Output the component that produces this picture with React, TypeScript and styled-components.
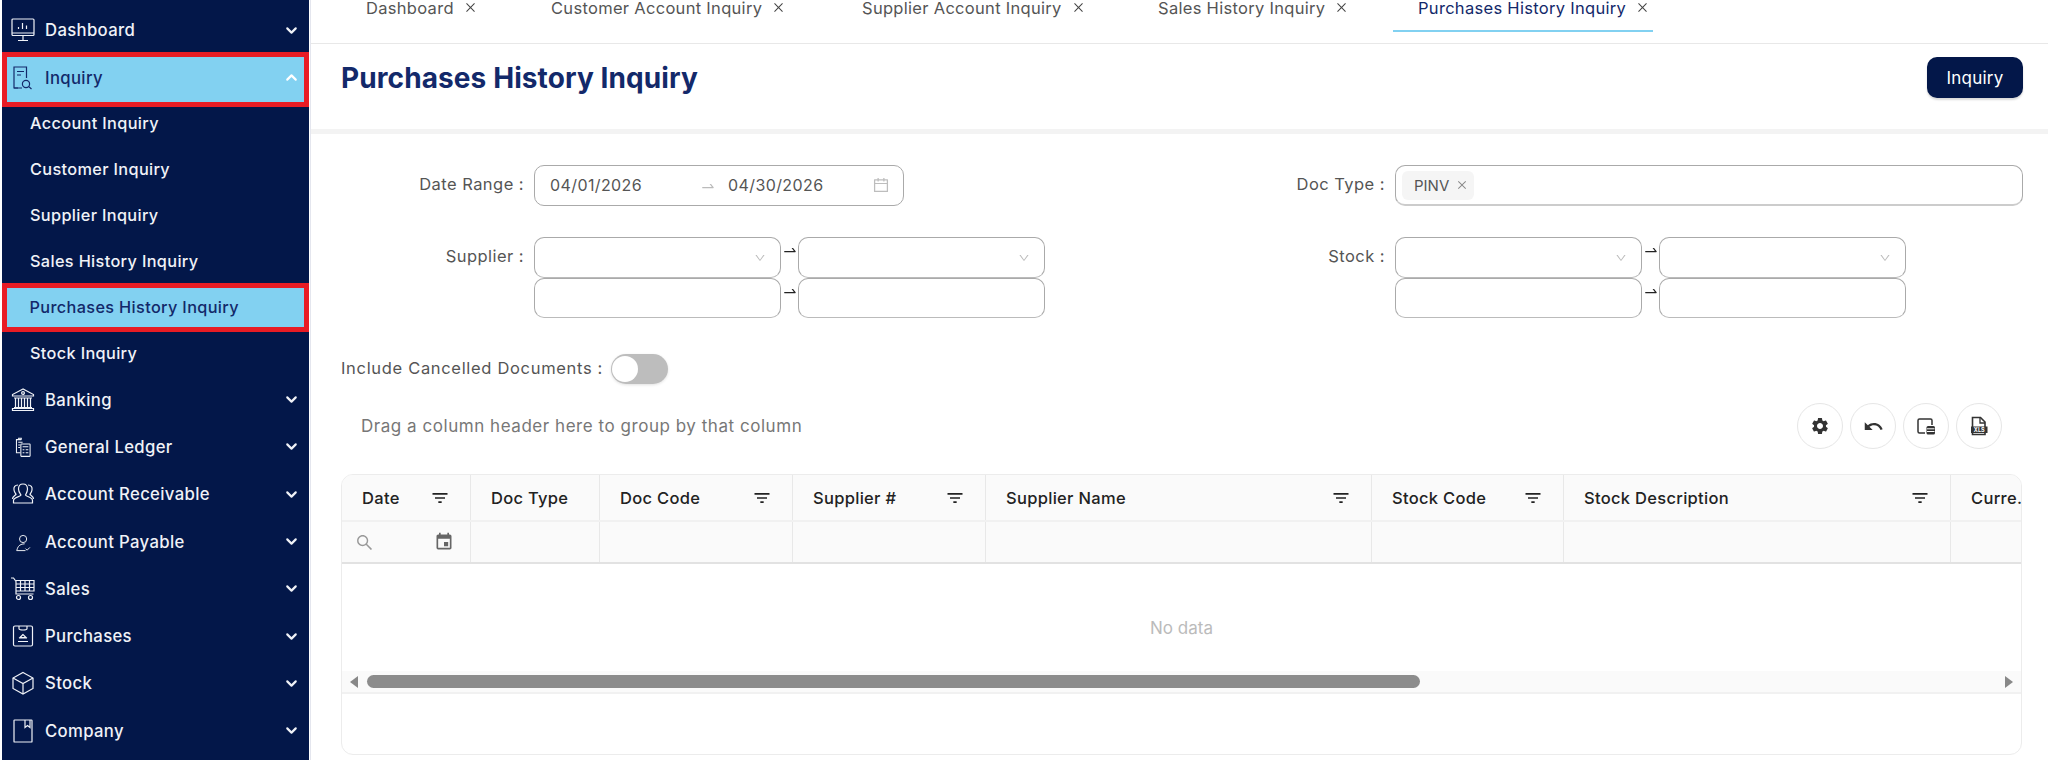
import React from "react";
import styled, { createGlobalStyle } from "styled-components";
import { ChevronDown, ChevronUp } from "lucide-react";
import {
  AiOutlineCalendar,
  AiOutlineClose,
  AiOutlineDown,
  AiOutlineSearch,
  AiOutlineSwapRight,
} from "react-icons/ai";
import { MdEvent, MdFilterList, MdSettings, MdUndo } from "react-icons/md";

const NAVY = "#031749";
const SKY = "#82d1f1";

const GlobalStyle = createGlobalStyle`
  html, body {
    margin: 0;
    padding: 0;
    background: #fff;
    overflow: hidden;
  }
  body, input, button {
    font-family: Inter, "Open Sans", "Liberation Sans", sans-serif;
  }
  * {
    box-sizing: border-box;
  }
`;

// sidebar icons, all drawn on a 24 box
const icons: Record<string, React.ReactNode> = {
  dashboard: (
    <>
      <rect x="1" y="1" width="22" height="16.5" rx="1" />
      <path d="M1 15h22M12 17.5V22M7 22.5h10M7.5 11V9M11.5 11V5M15.5 11V7.5" />
    </>
  ),
  inquiry: (
    <>
      <path d="M15.5 12V1H3v21h8" />
      <path d="M6 5.5h7M6 9h4" />
      <circle cx="15" cy="18" r="3.6" />
      <path d="M17.8 20.6l2.7 2.4M3 22h4" />
    </>
  ),
  banking: (
    <>
      <path d="M12 1L1.5 6.5v1.5h21V6.500z" />
      <circle cx="12" cy="5" r="1.400" />
      <path d="M3 10h18M4.500 10v9M7.500 10v9M10.500 10v9M13.500 10v9M16.500 10v9M19.500 10v9M3 19.500h18M1.500 22.500h21v-2h-21z" />
    </>
  ),
  ledger: (
    <g transform="translate(1.5 2) scale(.88)">
      <path d="M10 3H4.500v15H9M7 3V1.500h3V3M6.500 6h5M6.500 9h2M6.500 12h2" />
      <rect x="9.500" y="8" width="10.500" height="14" rx=".6" />
      <path d="M11.500 11h6.500M11.500 14.500h2M15 14.500h3M11.500 18h2M15 18h3" />
    </g>
  ),
  receivable: (
    <>
      <path d="M12 2c3 0 4.500 2.200 4.500 5s-1.500 5-2 6c1 2 7 2 7 5.500V21H2.500v-2.500C2.500 15 9 15 10 13c-.6-1-2.500-3-2.500-6s1.500-5 4.500-5z" />
      <path d="M17 3c3 0 4.500 2 4 5s-2 3.500-2 4.500c1 1 3.500 2 3.500 4.500M7 3C4 3 2.500 5 3 8s2 3.500 2 4.500c-1 1-3.500 2-3.500 4.500" />
    </>
  ),
  payable: (
    <g transform="translate(2.500 3) scale(.8)">
      <circle cx="12" cy="7.500" r="4.500" />
      <path d="M14 13.500c-5 0-8 2.500-9 5.500l-1 3h11M15 19.500l2 2 3.500-3.500" />
    </g>
  ),
  sales: (
    <>
      <path d="M0 1h2.500l2.500 3.500v12.500h17.500M5 3.500h18v10.500H5M5 7h18M5 10.500h18M9.500 3.500V14M14 3.500V14M18.500 3.500V14" />
      <circle cx="7.500" cy="20.500" r="2" />
      <circle cx="19.500" cy="20.500" r="2" />
    </>
  ),
  purchases: (
    <>
      <rect x="2.500" y="2" width="19" height="20" rx="1.500" />
      <path d="M8 2v2.500c0 2 8 2 8 0V2M7 17.500h10M8 14h8M12 10.500l-3 3h6z" />
    </>
  ),
  stock: (
    <>
      <path d="M12 1.500l10 5.500v10.500L12 23 2 17.500V7z" />
      <path d="M2 7l10 5.500L22 7M12 12.500V23" />
    </>
  ),
  company: (
    <>
      <rect x="3" y="1" width="18" height="22" rx=".6" />
      <path d="M14 1v7.500l2.500-2 2.500 2V1" />
    </>
  ),
};

const menuAfter = [
  ["Banking", "banking"],
  ["General Ledger", "ledger"],
  ["Account Receivable", "receivable"],
  ["Account Payable", "payable"],
  ["Sales", "sales"],
  ["Purchases", "purchases"],
  ["Stock", "stock"],
  ["Company", "company"],
];

const subItems = [
  "Account Inquiry",
  "Customer Inquiry",
  "Supplier Inquiry",
  "Sales History Inquiry",
  "Purchases History Inquiry",
  "Stock Inquiry",
];

const tabs = [
  { label: "Dashboard", width: 185 },
  { label: "Customer Account Inquiry", width: 311 },
  { label: "Supplier Account Inquiry", width: 296 },
  { label: "Sales History Inquiry", width: 260 },
  { label: "Purchases History Inquiry", width: 260 },
];

const columns = [
  { label: "Date", width: 129, filter: true },
  { label: "Doc Type", width: 129, filter: false },
  { label: "Doc Code", width: 193, filter: true },
  { label: "Supplier #", width: 193, filter: true },
  { label: "Supplier Name", width: 386, filter: true },
  { label: "Stock Code", width: 192, filter: true },
  { label: "Stock Description", width: 387, filter: true },
  { label: "Curre.", width: 71, filter: false },
];

const NavIcon: React.FC<{ name: string; dark?: boolean }> = ({ name, dark }) => (
  <IconSvg viewBox="0 0 24 24" $dark={dark}>
    {icons[name]}
  </IconSvg>
);

const RangeInputs: React.FC = () => (
  <RangeGrid>
    <SelectBox>
      <AiOutlineDown size={12} />
    </SelectBox>
    <RangeArrow>
      <AiOutlineSwapRight size={16} />
    </RangeArrow>
    <SelectBox>
      <AiOutlineDown size={12} />
    </SelectBox>
    <SelectBox $short />
    <RangeArrow>
      <AiOutlineSwapRight size={16} />
    </RangeArrow>
    <SelectBox $short />
  </RangeGrid>
);

const App: React.FC = () => (
  <Page>
    <GlobalStyle />
    <Sidebar>
      <MenuRow $first>
        <NavIcon name="dashboard" />
        <MenuLabel>Dashboard</MenuLabel>
        <ChevronDown size={17} strokeWidth={3} />
      </MenuRow>
      <MenuRowActive>
        <NavIcon name="inquiry" dark />
        <MenuLabel>Inquiry</MenuLabel>
        <ChevronUp size={17} strokeWidth={3} color="#fff" />
      </MenuRowActive>
      <SubList>
        {subItems.map((item) => (
          <SubItem key={item} $active={item === "Purchases History Inquiry"}>
            {item}
          </SubItem>
        ))}
      </SubList>
      {menuAfter.map(([label, icon]) => (
        <MenuRow key={label}>
          <NavIcon name={icon} />
          <MenuLabel>{label}</MenuLabel>
          <ChevronDown size={17} strokeWidth={3} />
        </MenuRow>
      ))}
    </Sidebar>

    <Main>
      <TabBar>
        {tabs.map((tab) => (
          <Tab key={tab.label} $width={tab.width} $active={tab.label === "Purchases History Inquiry"}>
            <TabText>{tab.label}</TabText>
            <AiOutlineClose size={13} />
          </Tab>
        ))}
      </TabBar>

      <PageHeader>
        <Title>Purchases History Inquiry</Title>
        <PrimaryButton>Inquiry</PrimaryButton>
      </PageHeader>

      <FormGrid>
        <FormRow>
          <FieldLabel>Date Range :</FieldLabel>
          <DateBox>
            <DateValue $width={178}>04/01/2026</DateValue>
            <DateValue $width={144}>04/30/2026</DateValue>
            <AiOutlineCalendar size={18} color="#bdbdbd" />
            <DateArrow>
              <AiOutlineSwapRight size={16} />
            </DateArrow>
          </DateBox>
        </FormRow>
        <FormRow>
          <FieldLabel>Doc Type :</FieldLabel>
          <TagBox>
            <Tag>
              PINV
              <AiOutlineClose size={12} color="#888" />
            </Tag>
          </TagBox>
        </FormRow>
        <FormRow>
          <FieldLabel>Supplier :</FieldLabel>
          <RangeInputs />
        </FormRow>
        <FormRow>
          <FieldLabel>Stock :</FieldLabel>
          <RangeInputs />
        </FormRow>
      </FormGrid>

      <SwitchRow>
        <FieldText>Include Cancelled Documents :</FieldText>
        <SwitchTrack>
          <SwitchKnob />
        </SwitchTrack>
      </SwitchRow>

      <GridToolbar>
        <GroupHint>Drag a column header here to group by that column</GroupHint>
        <ToolButtons>
          <ToolButton>
            <MdSettings size={20} />
          </ToolButton>
          <ToolButton>
            <MdUndo size={21} />
          </ToolButton>
          <ToolButton>
            <svg width="20" height="20" viewBox="0 0 20 20" fill="none">
              <path d="M9 17H3.500A1.500 1.500 0 0 1 2 15.500v-11A1.500 1.500 0 0 1 3.500 3h11A1.500 1.500 0 0 1 16 4.500V9" stroke="#333" strokeWidth="1.500" />
              <rect x="10.500" y="10" width="8.500" height="8.500" rx="1.500" fill="#333" />
              <path d="M11 12.800h7.500M11 15.500h7.500" stroke="#fff" strokeWidth="1" />
            </svg>
          </ToolButton>
          <ToolButton>
            <svg width="20" height="20" viewBox="0 0 20 20" fill="none">
              <path d="M3.500 11V1.500h8l4.500 4.500v5M3.500 16.500v2h12.500v-2" stroke="#333" strokeWidth="1.600" />
              <path d="M11 1.500v5.500h5" stroke="#333" strokeWidth="1.300" />
              <rect x="2" y="10.500" width="16.500" height="6.500" fill="#333" />
              <XlsText x="10.250" y="15.700">XLS</XlsText>
            </svg>
          </ToolButton>
        </ToolButtons>
      </GridToolbar>

      <TableShell>
        <HeadRow>
          {columns.map((col) => (
            <HeadCell key={col.label} $width={col.width}>
              {col.label}
              {col.filter && <MdFilterList size={20} />}
            </HeadCell>
          ))}
        </HeadRow>
        <FilterRow>
          {columns.map((col, i) => (
            <FilterCell key={col.label} $width={col.width}>
              {i === 0 && (
                <>
                  <AiOutlineSearch size={19} color="#999" />
                  <MdEvent size={20} color="#666" />
                </>
              )}
            </FilterCell>
          ))}
        </FilterRow>
        <EmptyBody>No data</EmptyBody>
        <ScrollBar>
          <svg width="10" height="14" viewBox="0 0 10 14">
            <polygon points="9,1 9,13 1,7" fill="#888" />
          </svg>
          <ScrollThumb />
          <svg width="10" height="14" viewBox="0 0 10 14">
            <polygon points="1,1 1,13 9,7" fill="#888" />
          </svg>
        </ScrollBar>
      </TableShell>
    </Main>
  </Page>
);

export default App;

const Page = styled.div`
  display: flex;
  width: 2048px;
  height: 760px;
  overflow: hidden;
`;

const Sidebar = styled.aside`
  flex: none;
  width: 307px;
  height: 760px;
  margin-left: 2px;
  background: ${NAVY};
  color: #f0f2f7;
  overflow: hidden;
  font-size: 16.3px;
  font-weight: 500;
`;

const MenuRow = styled.div<{ $first?: boolean }>`
  display: flex;
  align-items: center;
  height: ${({ $first }) => ($first ? "52px" : "47.3px")};
  padding: ${({ $first }) => ($first ? "8px" : "0")} 9px 0 9px;
`;

const MenuRowActive = styled.div`
  display: flex;
  align-items: center;
  height: 55px;
  padding: 0 4px 4px 4px;
  background: ${SKY};
  border: 5.5px solid #e81c24;
  color: #13296a;
`;

const MenuLabel = styled.span`
  flex: 1;
  margin-left: 10px;
  font-size: 16.7px;
  letter-spacing: 0.35px;
`;

const IconSvg = styled.svg<{ $dark?: boolean }>`
  flex: none;
  width: 24px;
  height: 24px;
  fill: none;
  stroke: ${({ $dark }) => ($dark ? "#13296a" : "#f0f2f7")};
  stroke-width: 1.2;
`;

const SubList = styled.div`
  margin-top: -7px;
`;

const SubItem = styled.div<{ $active?: boolean }>`
  position: relative;
  display: flex;
  align-items: center;
  height: ${({ $active }) => ($active ? "49px" : "46px")};
  margin: ${({ $active }) => ($active ? "-1.5px 0" : "0")};
  padding-left: ${({ $active }) => ($active ? "22.5px" : "28px")};
  letter-spacing: 0.35px;
  ${({ $active }) =>
    $active
      ? `
    background: ${SKY};
    border: 5.5px solid #e81c24;
    color: #13296a;
  `
      : ""}
`;

const Main = styled.main`
  flex: 1;
  min-width: 0;
  margin-left: 1px;
  border-left: 1px solid #e4e6ee;
`;

const TabBar = styled.nav`
  display: flex;
  height: 44px;
  padding-left: 30px;
  border-bottom: 1px solid #e8e8e8;
  font-size: 16.5px;
  color: #555;
`;

const Tab = styled.div<{ $width: number; $active?: boolean }>`
  display: flex;
  flex: none;
  align-items: flex-start;
  gap: 10px;
  width: ${({ $width }) => $width}px;
  height: 32px;
  padding-left: 25px;
  line-height: 17px;
  color: ${({ $active }) => ($active ? "#13296a" : "#555")};
  border-bottom: ${({ $active }) => ($active ? `2px solid ${SKY}` : "none")};

  svg {
    margin-top: 1px;
    color: #444;
  }
`;

const TabText = styled.span`
  letter-spacing: 0.3px;
  white-space: nowrap;
`;

const PageHeader = styled.header`
  display: flex;
  align-items: center;
  justify-content: space-between;
  height: 90px;
  padding: 0 25px 18px 30px;
  border-bottom: 5px solid #f3f3f3;
`;

const Title = styled.h1`
  margin: 0;
  font-size: 28px;
  font-weight: 700;
  color: #13296a;
  letter-spacing: 0.1px;
`;

const PrimaryButton = styled.button`
  width: 96px;
  height: 41px;
  border: none;
  border-radius: 10px;
  background: ${NAVY};
  box-shadow: 0 2px 2px rgba(0, 0, 0, 0.15);
  color: #fff;
  font-size: 17px;
  letter-spacing: 0.2px;
`;

const FormGrid = styled.section`
  display: grid;
  grid-template-columns: 861px 1fr;
  row-gap: 31px;
  padding: 31px 25px 0 0;
`;

const FormRow = styled.div`
  display: flex;
  align-items: flex-start;
  gap: 10px;
`;

const FieldLabel = styled.label`
  flex: none;
  width: 213px;
  height: 41px;
  line-height: 39px;
  text-align: right;
  font-size: 16.5px;
  color: #555;
  letter-spacing: 0.45px;
`;

const DateBox = styled.div`
  position: relative;
  display: flex;
  align-items: center;
  width: 370px;
  height: 41px;
  padding: 0 0 2px 15px;
  border: 1px solid #aaa;
  border-radius: 10px;
  font-size: 16px;
  color: #555;
`;

const DateValue = styled.span<{ $width: number }>`
  flex: none;
  width: ${({ $width }) => $width}px;
  letter-spacing: 0.4px;
`;

const DateArrow = styled.span`
  position: absolute;
  left: 165px;
  top: 12px;
  color: #bbb;
`;

const TagBox = styled.div`
  display: flex;
  align-items: center;
  flex: 1;
  height: 41px;
  padding-left: 6px;
  border: 1px solid #aaa;
  border-bottom-width: 2px;
  border-bottom-color: #ccc;
  border-radius: 10px;
`;

const Tag = styled.span`
  display: flex;
  align-items: center;
  gap: 7px;
  height: 29px;
  padding: 0 6px 0 12px;
  border-radius: 6px;
  background: #f5f5f5;
  font-size: 15px;
  color: #555;
`;

const RangeGrid = styled.div`
  display: grid;
  grid-template-columns: 247px 17px 247px;
  grid-auto-rows: auto;
`;

const SelectBox = styled.div<{ $short?: boolean }>`
  display: flex;
  align-items: center;
  justify-content: flex-end;
  height: ${({ $short }) => ($short ? "40px" : "41px")};
  padding-right: 14px;
  border: 1px solid #aaa;
  border-bottom-color: #bbb;
  border-radius: 10px;
  color: #bbb;
`;

const RangeArrow = styled.div`
  display: flex;
  justify-content: center;
  padding-top: 5px;
  color: #222;
`;

const SwitchRow = styled.div`
  display: flex;
  align-items: center;
  gap: 8px;
  height: 30px;
  margin-top: 36px;
  padding-left: 30px;
`;

const FieldText = styled.span`
  padding-bottom: 2px;
  font-size: 16.5px;
  color: #555;
  letter-spacing: 0.68px;
`;

const SwitchTrack = styled.div`
  display: flex;
  align-items: center;
  width: 57px;
  height: 30px;
  padding-left: 1px;
  border-radius: 15px;
  background: #bdbdbd;
  box-shadow: 0 1px 3px rgba(0, 0, 0, 0.12);
`;

const SwitchKnob = styled.div`
  width: 26px;
  height: 26px;
  border-radius: 50%;
  background: #fff;
`;

const GridToolbar = styled.div`
  display: flex;
  align-items: center;
  justify-content: space-between;
  height: 46px;
  margin-top: 19px;
  padding: 0 46px 0 50px;
`;

const GroupHint = styled.span`
  font-size: 17px;
  color: #777;
  letter-spacing: 0.54px;
`;

const ToolButtons = styled.div`
  display: flex;
  gap: 7px;
`;

const ToolButton = styled.button`
  display: flex;
  align-items: center;
  justify-content: center;
  width: 46px;
  height: 46px;
  padding: 0;
  border: 1px solid #e6e6e6;
  border-radius: 50%;
  background: #fff;
  color: #333;
`;

const XlsText = styled.text`
  font-size: 5.5px;
  font-weight: 700;
  fill: #fff;
  text-anchor: middle;
`;

const TableShell = styled.section`
  width: 1681px;
  height: 281px;
  margin: 25px 0 0 30px;
  border: 1px solid #ececec;
  border-radius: 12px;
  overflow: hidden;
`;

const HeadRow = styled.div`
  display: flex;
  height: 47px;
  background: #fafafa;
  border-bottom: 2px solid #f1f1f1;
`;

const HeadCell = styled.div<{ $width: number }>`
  display: flex;
  flex: none;
  align-items: center;
  justify-content: space-between;
  width: ${({ $width }) => $width}px;
  padding: 0 20px 0 20px;
  border-right: 1px solid #e8e8e8;
  font-size: 16.5px;
  font-weight: 500;
  color: #222;
  letter-spacing: 0.3px;
  white-space: nowrap;

  &:last-child {
    border-right: none;
  }
`;

const FilterRow = styled.div`
  display: flex;
  height: 42px;
  background: #fafafa;
  border-bottom: 2px solid #e2e2e2;
`;

const FilterCell = styled.div<{ $width: number }>`
  display: flex;
  flex: none;
  align-items: center;
  justify-content: space-between;
  width: ${({ $width }) => $width}px;
  padding: 0 16px 0 13px;
  border-right: 1px solid #e8e8e8;

  &:last-child {
    border-right: none;
  }
`;

const EmptyBody = styled.div`
  display: flex;
  align-items: center;
  justify-content: center;
  height: 107px;
  padding-top: 20px;
  font-size: 17px;
  color: #bbb;
`;

const ScrollBar = styled.div`
  display: flex;
  align-items: center;
  gap: 8px;
  height: 23px;
  padding: 0 7px;
  background: #fafafa;
  border-bottom: 2px solid #f1f1f1;

  svg:last-child {
    margin-left: auto;
  }
`;

const ScrollThumb = styled.div`
  width: 1053px;
  height: 13px;
  border-radius: 7px;
  background: #8c8c8c;
`;
